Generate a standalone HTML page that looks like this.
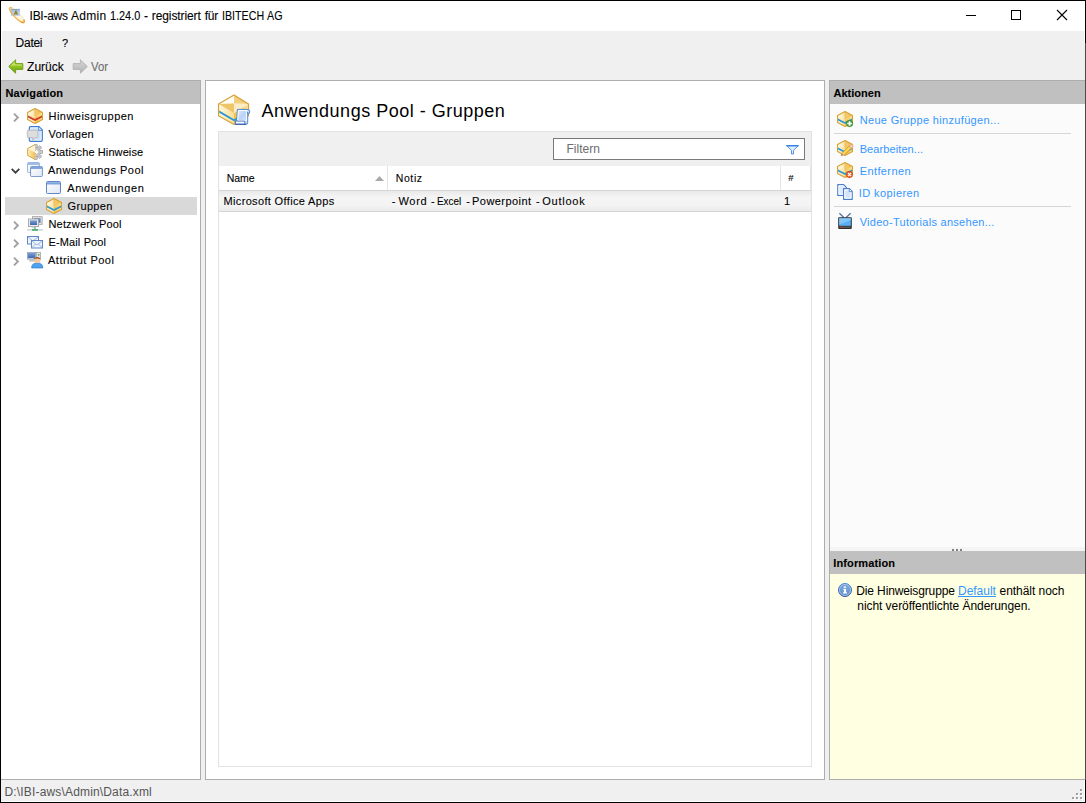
<!DOCTYPE html>
<html><head><meta charset="utf-8"><title>IBI-aws Admin</title>
<style>
*{box-sizing:border-box;margin:0;padding:0}
html,body{width:1086px;height:803px;overflow:hidden;background:#f0f0f0}
body{font-family:"Liberation Sans",sans-serif;font-size:12px;color:#000;position:relative}
.t{position:absolute;white-space:nowrap;line-height:20px;height:20px;-webkit-text-stroke:0.1px currentColor}
.a{position:absolute}
svg{position:absolute;overflow:visible}
</style></head><body>
<svg width="0" height="0" style="left:0;top:0"><defs>
<linearGradient id="gTop" x1="0" y1="0" x2="1" y2="0"><stop offset="0" stop-color="#fffef6"/><stop offset="0.45" stop-color="#fbe6ad"/><stop offset="0.55" stop-color="#f3cb6c"/><stop offset="1" stop-color="#f5bd48"/></linearGradient>
<linearGradient id="gL" x1="0" y1="0" x2="1" y2="0"><stop offset="0" stop-color="#fff8de"/><stop offset="1" stop-color="#f9de94"/></linearGradient>
<linearGradient id="gR" x1="0" y1="0" x2="1" y2="0"><stop offset="0" stop-color="#f6c045"/><stop offset="1" stop-color="#fbe29a"/></linearGradient>
<linearGradient id="gWin" x1="0" y1="0" x2="1" y2="1"><stop offset="0" stop-color="#ffffff"/><stop offset="1" stop-color="#dfe6f4"/></linearGradient>
<linearGradient id="gGreen" x1="0" y1="0" x2="0" y2="1"><stop offset="0" stop-color="#b5dc3c"/><stop offset="1" stop-color="#6aa60e"/></linearGradient>
<linearGradient id="gGray" x1="0" y1="0" x2="0" y2="1"><stop offset="0" stop-color="#d6d6d6"/><stop offset="1" stop-color="#b4b4b4"/></linearGradient>
<linearGradient id="gScroll" x1="0" y1="0" x2="1" y2="0"><stop offset="0" stop-color="#eef4fe"/><stop offset="0.5" stop-color="#b9d2f6"/><stop offset="1" stop-color="#dbe8fb"/></linearGradient>
<radialGradient id="gInfo" cx="0.5" cy="0.35" r="0.7"><stop offset="0" stop-color="#86aee0"/><stop offset="1" stop-color="#5585c4"/></radialGradient><linearGradient id="gInfoS" x1="0" y1="0" x2="0" y2="1"><stop offset="0" stop-color="#4a8ad6"/><stop offset="1" stop-color="#36509f"/></linearGradient>
<linearGradient id="gMon" x1="0" y1="0" x2="0" y2="1"><stop offset="0" stop-color="#7d9fd6"/><stop offset="1" stop-color="#3f68b2"/></linearGradient>
<linearGradient id="gSq" x1="0" y1="0" x2="0" y2="1"><stop offset="0" stop-color="#7391b6"/><stop offset=".25" stop-color="#a4c0e4"/><stop offset="1" stop-color="#bcd6f6"/></linearGradient>
<linearGradient id="gHalf" x1="0" y1="0" x2="1" y2="0"><stop offset="0" stop-color="#fff0c4"/><stop offset="1" stop-color="#f4bf4c"/></linearGradient>
<linearGradient id="gScroll2" x1="0" y1="0" x2="1" y2="1"><stop offset="0" stop-color="#dfeafb"/><stop offset=".5" stop-color="#bdd4f6"/><stop offset="1" stop-color="#cfe0f9"/></linearGradient>
<symbol id="box" viewBox="0 0 16 16">
 <path d="M8 .5L15.5 4.5V11.5L8 15.5L.5 11.5V4.5Z" fill="#fff6d8"/>
 <path d="M8 .5L15.5 4.5L8 9L.5 4.5Z" fill="url(#gTop)"/>
 <path d="M.5 4.5L8 9V15.5L.5 11.5Z" fill="url(#gL)"/>
 <path d="M15.5 4.5L8 9V15.5L15.5 11.5Z" fill="url(#gR)"/>
 <path d="M1 7.6L8 10.9L15 7.6V9.6L8 12.9L1 9.6Z" style="fill:var(--band)"/>
 <path d="M8 1V8.6" stroke="#d8a53c" stroke-width=".7" opacity=".7"/>
 <path d="M8 .5L15.5 4.5V11.5L8 15.5L.5 11.5V4.5Z" fill="none" stroke="#d6a235" stroke-width="1.1" stroke-linejoin="round"/>
</symbol>
<symbol id="boxs" viewBox="0 0 16 16">
 <path d="M7 .5L13.5 4V10L7 13.5L.5 10V4Z" fill="#fff6d8"/>
 <path d="M7 .5L13.5 4L7 7.8L.5 4Z" fill="url(#gTop)"/>
 <path d="M.5 4L7 7.8V13.5L.5 10Z" fill="url(#gL)"/>
 <path d="M13.5 4L7 7.8V13.5L13.5 10Z" fill="url(#gR)"/>
 <path d="M1 6.6L7 10L13 6.6V8.6L7 12L1 8.6Z" fill="#3a9fd8"/>
 <path d="M7 .5L13.5 4V10L7 13.5L.5 10V4Z" fill="none" stroke="#d6a235" stroke-width="1.1" stroke-linejoin="round"/>
</symbol>
<symbol id="win" viewBox="0 0 15 13">
 <rect x=".5" y=".5" width="14" height="12" rx="1.2" fill="url(#gWin)" stroke="#5f86c6"/>
 <path d="M1 1.2h13v2.3h-13z" fill="#7ea4dd"/>
</symbol>
<symbol id="chev" viewBox="0 0 6 10"><path d="M.8 .8L5 5L.8 9.2" fill="none" stroke="#a0a0a0" stroke-width="1.9"/></symbol>
</defs></svg>
<!-- window frame -->
<div class="a" style="left:0;top:0;width:1086px;height:803px;border:1px solid #000;background:#f0f0f0"></div>
<div class="a" style="left:1px;top:1px;width:1084px;height:30px;background:#fff"></div>
<div class="a" style="left:1px;top:31px;width:1px;height:49px;background:#fff"></div>
<div class="a" style="left:1084px;top:31px;width:1px;height:12px;background:#fff"></div>
<div class="a" style="left:1085px;top:43px;width:1px;height:737px;background:#4a4a4a"></div>
<div class="a" style="left:1px;top:801px;width:1084px;height:1px;background:#fff"></div>
<div class="a" style="left:1084px;top:780px;width:1px;height:21px;background:#fff"></div>

<!-- left panel -->
<div class="a" style="left:1px;top:80px;width:200px;height:700px;background:#fff;border:1px solid #adadad;border-left:none"></div>
<div class="a" style="left:1px;top:81px;width:199px;height:23px;background:#c0c0c0"></div>
<div class="a" style="left:5px;top:197px;width:192px;height:18px;background:#d9d9d9"></div>

<!-- center panel -->
<div class="a" style="left:205px;top:80px;width:620px;height:700px;background:#fff;border:1px solid #adadad"></div>
<div class="a" style="left:218px;top:131px;width:594px;height:636px;background:#fff;border:1px solid #e2e2e2"></div>
<div class="a" style="left:219px;top:132px;width:592px;height:34px;background:#f0f0f0"></div>
<div class="a" style="left:553px;top:138px;width:252px;height:22px;background:#fff;border:1px solid #7a7a7a"></div>
<div class="a" style="left:387px;top:166px;width:1px;height:24px;background:#e5e5e5"></div>
<div class="a" style="left:780px;top:166px;width:1px;height:24px;background:#e5e5e5"></div>
<div class="a" style="left:810px;top:166px;width:1px;height:24px;background:#e6e6e6"></div>
<div class="a" style="left:219px;top:190px;width:592px;height:22px;background:linear-gradient(#e9e9e9,#f4f4f4 30%,#f4f4f4 70%,#ebebeb);border-top:1px solid #d5d5d5;border-bottom:1px solid #d5d5d5"></div>

<!-- right panel -->
<div class="a" style="left:829px;top:80px;width:256px;height:700px;background:#fbfbfb;border:1px solid #adadad;border-right:none"></div>
<div class="a" style="left:830px;top:81px;width:255px;height:23px;background:#c0c0c0"></div>
<div class="a" style="left:834px;top:133px;width:237px;height:1px;background:#d6d6d6"></div>
<div class="a" style="left:834px;top:206px;width:237px;height:1px;background:#d6d6d6"></div>
<div class="a" style="left:830px;top:547px;width:255px;height:4px;background:#f4f4f4"></div>
<div class="a" style="left:830px;top:551px;width:255px;height:23px;background:#c0c0c0"></div>
<div class="a" style="left:830px;top:574px;width:255px;height:205px;background:#ffffe1"></div>
<!-- splitter grip -->
<div class="a" style="left:952px;top:549px;width:2px;height:2px;background:#808080;box-shadow:4px 0 0 #808080,8px 0 0 #808080"></div>
<!-- size grip -->
<div class="a" style="left:1080px;top:789px;width:2px;height:2px;background:#a0a0a0;box-shadow:1px 1px 0 #fff, 0 4px 0 #a0a0a0,1px 5px 0 #fff, 0 8px 0 #a0a0a0,1px 9px 0 #fff, -4px 4px 0 #a0a0a0,-3px 5px 0 #fff, -4px 8px 0 #a0a0a0,-3px 9px 0 #fff, -8px 8px 0 #a0a0a0,-7px 9px 0 #fff"></div>

<svg style="left:8px;top:6px" width="18" height="18" viewBox="0 0 18 18">
<ellipse cx="9.1" cy="9.3" rx="9.9" ry="2.8" transform="rotate(45 9.1 9.3)" fill="#fff3d6" fill-opacity=".75"/>
<path d="M2.1 2.3A9.9 2.8 45 0 1 16.1 16.3" fill="none" stroke="#f3c777" stroke-width="1" opacity=".5"/>
<rect x="3" y="2.9" width="8.9" height="7.1" fill="url(#gSq)" opacity=".92"/>
<path d="M6.3 8.8L7.9 4.9L9.5 8.8M6.9 7.6h2" stroke="#94801a" stroke-width="1.1" fill="none"/>
<path d="M2.1 2.3A9.9 2.8 45 0 0 16.1 16.3" fill="none" stroke="#eeab3f" stroke-width="1.2" opacity=".85"/>
<path d="M13.2 15.8A9.9 2.8 45 0 0 16.1 16.3A9.9 2.8 45 0 0 15.7 13.4" fill="none" stroke="#e89a24" stroke-width="1.3"/>
<path d="M1.9 4.2A9.9 2.8 45 0 1 4.2 1.9" fill="none" stroke="#f0b24a" stroke-width="1.5" opacity=".8"/>
</svg>
<svg style="left:966px;top:15px" width="10" height="1" viewBox="0 0 10 1"><rect width="10" height="1" fill="#000"/></svg>
<svg style="left:1011px;top:10px" width="10" height="10" viewBox="0 0 10 10"><rect x=".5" y=".5" width="9" height="9" fill="none" stroke="#000"/></svg>
<svg style="left:1057px;top:10px" width="10" height="10" viewBox="0 0 10 10"><path d="M0 0L10 10M10 0L0 10" stroke="#000" stroke-width="1.1"/></svg>
<svg style="left:8px;top:59px" width="16" height="15" viewBox="0 0 16 15"><path d="M.7 7.5L7.6 .8V4.6H14.8V10.4H7.6V14.2Z" fill="url(#gGreen)" stroke="#6a9c12" stroke-width=".9" stroke-linejoin="round"/><path d="M2.3 7.4L6.8 3V5.4H14V6.6H5Z" fill="#d6ee7e" opacity=".8"/></svg>
<svg style="left:72px;top:59px" width="16" height="15" viewBox="0 0 16 15"><path d="M15.3 7.5L8.4 .8V4.6H1.2V10.4H8.4V14.2Z" fill="url(#gGray)" stroke="#b0b0b0" stroke-width=".9" stroke-linejoin="round"/></svg>
<svg style="left:13px;top:113px" width="6" height="9" viewBox="0 0 6 9"><path d="M1 .6L4.9 4.5L1 8.4" fill="none" stroke="#a0a0a0" stroke-width="1.9"/></svg>
<svg style="left:13px;top:221px" width="6" height="9" viewBox="0 0 6 9"><path d="M1 .6L4.9 4.5L1 8.4" fill="none" stroke="#a0a0a0" stroke-width="1.9"/></svg>
<svg style="left:13px;top:239px" width="6" height="9" viewBox="0 0 6 9"><path d="M1 .6L4.9 4.5L1 8.4" fill="none" stroke="#a0a0a0" stroke-width="1.9"/></svg>
<svg style="left:13px;top:257px" width="6" height="9" viewBox="0 0 6 9"><path d="M1 .6L4.9 4.5L1 8.4" fill="none" stroke="#a0a0a0" stroke-width="1.9"/></svg>
<svg style="left:11px;top:168px" width="9" height="6" viewBox="0 0 9 6"><path d="M.7 .9L4.5 4.7L8.3 .9" fill="none" stroke="#3c3c3c" stroke-width="1.7"/></svg>
<svg style="left:27px;top:108px" width="16" height="16" viewBox="0 0 16 16"><use href="#box" width="16" height="16" style="--band:#cf3a2a"/></svg>
<svg style="left:27px;top:126px" width="16" height="16" viewBox="0 0 16 16">
<path d="M3.6 .7H12L15.3 4V14A1.3 1.3 0 0 1 14 15.3H3.6A1.3 1.3 0 0 1 2.3 14V2A1.3 1.3 0 0 1 3.6 .7Z" fill="#cde0f9" stroke="#3f7dd2" stroke-width="1.2"/>
<path d="M3.6 1.9H11.6L14.1 4.4V14H3.6Z" fill="none" stroke="#f2f7fe" stroke-width=".8"/>
<path d="M11.6 1V4.4H15" fill="#e6f0fd" stroke="#3f7dd2" stroke-width=".8"/>
<path d="M1.2 4.3H9.8A.9 .9 0 0 1 10.7 5.2V10.7A.9 .9 0 0 1 9.8 11.6H8L5.8 14.4V11.6H1.2A.9 .9 0 0 1 .3 10.7V5.2A.9 .9 0 0 1 1.2 4.3Z" fill="#dedede" stroke="#b5b5b5" stroke-width=".8"/>
</svg>
<svg style="left:27px;top:144px" width="16" height="16" viewBox="0 0 16 16">
<g fill="#cacaca" stroke="#909090" stroke-width=".6"><circle cx="8.6" cy="8" r="4.8"/>
<rect x="7.4" y=".7" width="2.8" height="3"/><rect x="7.4" y="12.3" width="2.8" height="3"/>
<rect x="12.6" y="6.6" width="3" height="2.8"/>
<rect x="11.2" y="2.2" width="3" height="2.8" transform="rotate(45 12.7 3.6)"/>
<rect x="11.2" y="11" width="3" height="2.8" transform="rotate(-45 12.7 12.4)"/></g>
<circle cx="8.6" cy="8" r="4.5" fill="#cacaca"/>
<circle cx="9.6" cy="8" r="1.9" fill="#fff" stroke="#a0a0a0" stroke-width=".4"/>
<path d="M8 .6L.6 4.6V11.4L8 15.4Z" fill="url(#gHalf)"/>
<path d="M8 .6L.6 4.6L8 8.4Z" fill="#fffbea" opacity=".85"/>
<path d="M8 .6L.6 4.6V11.4L8 15.4" fill="none" stroke="#dba83e" stroke-width="1" stroke-linejoin="round"/>
</svg>
<svg style="left:27px;top:162px" width="16" height="15" viewBox="0 0 16 15"><use href="#win" x="0" y="0" width="13" height="11" opacity=".75"/><use href="#win" x="3" y="4" width="13" height="11"/></svg>
<svg style="left:46px;top:181px" width="15" height="13" viewBox="0 0 15 13"><use href="#win" width="15" height="13"/></svg>
<svg style="left:46px;top:198px" width="16" height="16" viewBox="0 0 16 16"><use href="#box" width="16" height="16" style="--band:#2f9ad6"/></svg>
<svg style="left:27px;top:216px" width="16" height="16" viewBox="0 0 16 16">
<rect x="5.5" y=".7" width="9.6" height="7.6" fill="#e6e6e6" stroke="#9a9a9a" stroke-width=".8"/><rect x="7" y="2" width="6.6" height="4.6" fill="url(#gMon)"/>
<rect x="1.5" y="3" width="10" height="7.6" fill="#ececec" stroke="#9a9a9a" stroke-width=".8"/><rect x="3" y="4.4" width="7" height="4.6" fill="url(#gMon)"/>
<path d="M4.5 11.8h4l-.8-1.2h-2.4z" fill="#c8c8c8"/>
<rect x="0" y="13.2" width="16" height="1.4" fill="#c9d2d2"/><rect x="5" y="13" width="6" height="1.8" fill="#4fb07a"/><rect x="7.4" y="11" width="1.2" height="2.2" fill="#4fb07a"/>
</svg>
<svg style="left:27px;top:235.5px" width="16" height="13" viewBox="0 0 16 13">
<rect x=".5" y=".5" width="11" height="7.5" fill="#eef3fc" stroke="#5f86c6"/><path d="M1 1L6 5L11 1" fill="none" stroke="#8fb0e4" stroke-width=".9"/>
<rect x="4.5" y="4.5" width="11" height="7.5" fill="#eef3fc" stroke="#5f86c6"/><path d="M5 5L10 9L15 5M5 11.6L8.6 8M15 11.6L11.4 8" fill="none" stroke="#8fb0e4" stroke-width=".9"/>
</svg>
<svg style="left:27px;top:252px" width="16" height="16" viewBox="0 0 16 16">
<rect x="9.6" y=".6" width="4" height="7" fill="#e4e4e4" stroke="#9a9a9a" stroke-width=".7"/><rect x="11" y="2" width="1.4" height="1.6" fill="#3fb04f"/>
<rect x=".4" y=".4" width="8.4" height="6.8" fill="#d8d8d8" stroke="#7d8fb0" stroke-width=".6"/><rect x=".9" y=".9" width="7.4" height="5.2" fill="url(#gMon)"/>
<path d="M2 9.4h5.4l-.8-1.4h-3.8z" fill="#bdbdbd"/>
<path d="M4.6 16C4.6 12.4 6.6 11 10.2 11C13.8 11 15.8 12.4 15.8 16Z" fill="#4ea4ee" stroke="#2d6fc2" stroke-width=".6"/>
<circle cx="10.2" cy="8" r="3.2" fill="#f6c9a0"/><path d="M6.8 7.6C6.8 4.2 13.6 4.2 13.6 7.6C12 6.4 9 6.2 6.8 7.6Z" fill="#8a5a2c"/>
</svg>
<svg style="left:218px;top:94.3px" width="32" height="32" viewBox="0 0 32 32">
<path d="M16 1L30.5 10V21.8L16 30.4L.5 21.8V10Z" fill="#fdf2cc"/>
<path d="M16 1L.5 10L16 9.6Z" fill="#fffdf2"/><path d="M16 1L30.5 10L16 9.6Z" fill="#f3cf7c"/>
<path d="M.5 10L16 9.6V19.2Z" fill="#efc56a"/><path d="M30.5 10L16 9.6V19.2Z" fill="#fbecc6"/>
<path d="M.5 10L16 19.2V30.4L.5 21.8Z" fill="url(#gL)"/>
<path d="M30.5 10L16 19.2V30.4L30.5 21.8Z" fill="url(#gR)"/>
<path d="M1.2 16.6L16 25.2L22 21.8V23.8L16 27.2L1.2 18.8Z" fill="#2b97d4"/>
<path d="M16 1L30.5 10V21.8L16 30.4L.5 21.8V10Z" fill="none" stroke="#d6a03a" stroke-width="1.2" stroke-linejoin="round"/>
<path d="M19.4 15.4H29.2Q31.8 15.4 31.8 17.7Q31.8 19.8 29.7 19.8V28.8Q29.7 30.2 28.3 30.2H17.4V27H18.7Z" fill="url(#gScroll)" stroke="#4a84d4" stroke-width="1" stroke-linejoin="round"/>
<path d="M20.4 16.5H28.6V26.6H19.8Z" fill="url(#gScroll2)" stroke="#fff" stroke-width=".9"/>
<path d="M29.7 19.8V17.8" stroke="#3f74c4" stroke-width="1.1"/>
<path d="M17.4 27.1H26.8V30.1H17.4Z" fill="#fff" stroke="#3f6fc0" stroke-width=".9" stroke-linejoin="round"/>
<path d="M17.4 30.3H28.4" stroke="#335fae" stroke-width=".9"/>
</svg>
<svg style="left:786px;top:145px" width="13" height="10" viewBox="0 0 13 10"><path d="M.7 .7H12.3L7.5 5.3V9H5.5V5.3Z" fill="#e3eefc" stroke="#3f8ae3" stroke-width=".9" stroke-linejoin="round"/><path d="M.4 .7H12.6" stroke="#2f7fe0" stroke-width="1.3"/></svg>
<svg style="left:375px;top:176px" width="9" height="5" viewBox="0 0 9 5"><path d="M0 5L4.5 0L9 5Z" fill="#a9a9a9"/></svg>
<svg style="left:837px;top:111px" width="16" height="16" viewBox="0 0 16 16"><use href="#box" width="16" height="16" style="--band:#2f9ad6"/><circle cx="12.6" cy="12.5" r="3.2" fill="#4a9e38" stroke="#37802a" stroke-width=".6"/><path d="M12.6 10.2V14.8M10.3 12.5H14.9" stroke="#fff" stroke-width="1.7"/></svg>
<svg style="left:837px;top:140px" width="16" height="16" viewBox="0 0 16 16"><use href="#box" width="16" height="16" style="--band:#2f9ad6"/><path d="M4.4 15.4L5.6 12.4L12.2 6L14.4 8.4L7.6 14.6Z" fill="#f5d84e" stroke="#d08a2c" stroke-width=".8" stroke-linejoin="round"/><path d="M12.2 6L13.4 5A1.6 1.6 0 0 1 15.6 7.4L14.4 8.4Z" fill="#f6cdb8" stroke="#d9977a" stroke-width=".6"/><path d="M4.4 15.4L5.6 12.4L7.6 14.6Z" fill="#f1c9a4"/><path d="M4.4 15.4L4.9 14.1L5.8 15Z" fill="#3a2a1a"/></svg>
<svg style="left:837px;top:162px" width="16" height="16" viewBox="0 0 16 16"><use href="#box" width="16" height="16" style="--band:#2f9ad6"/><circle cx="12.5" cy="12.5" r="3.2" fill="#e4571f" stroke="#c8400f" stroke-width=".6"/><path d="M10.9 10.9L14.1 14.1M14.1 10.9L10.9 14.1" stroke="#fff" stroke-width="1.3"/></svg>
<svg style="left:837px;top:184px" width="16" height="16" viewBox="0 0 16 16">
<path d="M.8 .7H6.6L9.4 3.4V11.4H.8Z" fill="#dfeafb" stroke="#4c7dcc" stroke-width="1.2" stroke-linejoin="round"/>
<path d="M1.9 1.8H6.2L8.3 3.9V10.3H1.9Z" fill="none" stroke="#fff" stroke-width=".9"/>
<path d="M6.6 4.7H12.4L15.2 7.4V15.3H6.6Z" fill="#d5e4fa" stroke="#4c7dcc" stroke-width="1.2" stroke-linejoin="round"/>
<path d="M7.7 5.8H12L14.1 7.9V14.2H7.7Z" fill="none" stroke="#fff" stroke-width=".9"/>
<path d="M12.2 4.9V7.6H15" fill="#eef4fe" stroke="#4c7dcc" stroke-width=".8"/>
</svg>
<svg style="left:837px;top:213px" width="16" height="16" viewBox="0 0 16 16">
<path d="M2.4 .3L6.8 4.4M13.6 .3L9.2 4.4" stroke="#56739f" stroke-width="1.3"/>
<rect x="1.2" y="4.3" width="13.6" height="11.6" rx=".8" fill="#2e2e2e"/>
<rect x="2.2" y="5.2" width="11.6" height="7.6" fill="#5bb0f4"/>
<path d="M2.2 5.2H13.8V7L2.2 11.4Z" fill="#8fcbf9" opacity=".8"/>
<rect x="2.4" y="13.6" width="11.2" height="1.1" fill="#6a6a6a"/><rect x="3.6" y="13.4" width="1.6" height="1.4" fill="#e8282a"/>
</svg>
<svg style="left:838px;top:583px" width="14" height="14" viewBox="0 0 14 14"><circle cx="7" cy="7" r="6.5" fill="url(#gInfo)" stroke="url(#gInfoS)" stroke-width="1"/><circle cx="7" cy="7" r="5.5" fill="none" stroke="#c4d8f1" stroke-width=".8" opacity=".85"/><rect x="5.9" y="3.5" width="2" height="1.5" fill="#fff"/><path d="M5.4 6H8V9.2H8.9V10.4H5V9.2H6V6.9H5.4Z" fill="#fff"/></svg>

<div class="t" id="ti1" style="left:29.6px;top:6px;font-size:12px;letter-spacing:-0.283px;">IBI-aws</div>
<div class="t" id="ti2" style="left:71.1px;top:6px;font-size:12px;letter-spacing:0.275px;">Admin</div>
<div class="t" id="ti3" style="left:110.2px;top:6px;font-size:12px;transform:scaleX(0.906);transform-origin:0 0;">1.24.0</div>
<div class="t" id="ti4" style="left:144.0px;top:6px;font-size:12px;">-</div>
<div class="t" id="ti5" style="left:151.8px;top:6px;font-size:12px;letter-spacing:-0.100px;">registriert</div>
<div class="t" id="ti6" style="left:204.7px;top:6px;font-size:12px;letter-spacing:-0.250px;">für</div>
<div class="t" id="ti7" style="left:222.2px;top:6px;font-size:12px;transform:scaleX(0.889);transform-origin:0 0;">IBITECH</div>
<div class="t" id="ti8" style="left:267.2px;top:6px;font-size:12px;transform:scaleX(0.894);transform-origin:0 0;">AG</div>
<div class="t" id="m1" style="left:15.6px;top:33px;font-size:12px;letter-spacing:-0.275px;">Datei</div>
<div class="t" id="m2" style="left:62.0px;top:33px;font-size:11px;">?</div>
<div class="t" id="tb1" style="left:27.1px;top:57px;font-size:12px;">Zurück</div>
<div class="t" id="tb2" style="left:90.8px;top:57px;font-size:12px;transform:scaleX(0.939);transform-origin:0 0;color:#6d6d6d;">Vor</div>
<div class="t" id="nav" style="left:5.5px;top:83px;font-size:11px;font-weight:700;letter-spacing:0.144px;">Navigation</div>
<div class="t" id="t1" style="left:48.5px;top:106px;font-size:11px;letter-spacing:0.469px;">Hinweisgruppen</div>
<div class="t" id="t2" style="left:48.5px;top:124px;font-size:11px;letter-spacing:0.257px;">Vorlagen</div>
<div class="t" id="t3" style="left:48.5px;top:142px;font-size:11px;letter-spacing:0.100px;">Statische Hinweise</div>
<div class="t" id="t4" style="left:48.0px;top:160px;font-size:11px;letter-spacing:0.486px;">Anwendungs Pool</div>
<div class="t" id="t5" style="left:67.3px;top:178px;font-size:11px;letter-spacing:0.620px;">Anwendungen</div>
<div class="t" id="t6" style="left:67.5px;top:196px;font-size:11px;letter-spacing:0.350px;">Gruppen</div>
<div class="t" id="t7" style="left:48.5px;top:214px;font-size:11px;letter-spacing:0.167px;">Netzwerk Pool</div>
<div class="t" id="t8" style="left:48.5px;top:232px;font-size:11px;letter-spacing:0.130px;">E-Mail Pool</div>
<div class="t" id="t9" style="left:48.0px;top:250px;font-size:11px;letter-spacing:0.500px;">Attribut Pool</div>
<div class="t" id="head" style="left:261.5px;top:101px;font-size:18px;letter-spacing:0.508px;-webkit-text-stroke:0;">Anwendungs Pool - Gruppen</div>
<div class="t" id="filt" style="left:566.5px;top:139px;font-size:12px;color:#6d6d6d;-webkit-text-stroke:0;">Filtern</div>
<div class="t" id="c1" style="left:226.7px;top:168px;font-size:10.5px;letter-spacing:-0.067px;">Name</div>
<div class="t" id="c2" style="left:395.7px;top:168px;font-size:10.5px;letter-spacing:0.625px;">Notiz</div>
<div class="t" id="c3" style="left:788.3px;top:168px;font-size:9.5px;">#</div>
<div class="t" id="r1" style="left:223.5px;top:191px;font-size:11px;letter-spacing:0.345px;">Microsoft Office Apps</div>
<div class="t" id="r2a" style="left:391.8px;top:191px;font-size:11px;">-</div>
<div class="t" id="r2b" style="left:398.4px;top:191px;font-size:11px;letter-spacing:0.733px;">Word</div>
<div class="t" id="r2c" style="left:430.9px;top:191px;font-size:11px;">-</div>
<div class="t" id="r2d" style="left:437.2px;top:191px;font-size:11px;transform:scaleX(0.896);transform-origin:0 0;">Excel</div>
<div class="t" id="r2e" style="left:466.3px;top:191px;font-size:11px;">-</div>
<div class="t" id="r2f" style="left:472.1px;top:191px;font-size:11px;letter-spacing:0.433px;">Powerpoint</div>
<div class="t" id="r2g" style="left:535.9px;top:191px;font-size:11px;">-</div>
<div class="t" id="r2h" style="left:542.3px;top:191px;font-size:11px;letter-spacing:0.750px;">Outlook</div>
<div class="t" id="r3" style="left:784.0px;top:191px;font-size:11px;">1</div>
<div class="t" id="akt" style="left:833.4px;top:83px;font-size:11px;font-weight:700;letter-spacing:0.043px;">Aktionen</div>
<div class="t" id="a1" style="left:859.7px;top:110px;font-size:11px;letter-spacing:0.333px;color:#3497ff;-webkit-text-stroke:0;">Neue Gruppe hinzufügen...</div>
<div class="t" id="a2" style="left:859.7px;top:139px;font-size:11px;letter-spacing:0.092px;color:#3497ff;-webkit-text-stroke:0;">Bearbeiten...</div>
<div class="t" id="a3" style="left:859.7px;top:161px;font-size:11px;letter-spacing:0.400px;color:#3497ff;-webkit-text-stroke:0;">Entfernen</div>
<div class="t" id="a4" style="left:858.7px;top:183px;font-size:11px;letter-spacing:0.430px;color:#3497ff;-webkit-text-stroke:0;">ID kopieren</div>
<div class="t" id="a5" style="left:859.7px;top:212px;font-size:11px;letter-spacing:0.276px;color:#3497ff;-webkit-text-stroke:0;">Video-Tutorials ansehen...</div>
<div class="t" id="inf" style="left:833.2px;top:553px;font-size:11px;font-weight:700;letter-spacing:0.140px;">Information</div>
<div class="t" id="i1" style="left:856.3px;top:581px;font-size:12px;letter-spacing:-0.131px;-webkit-text-stroke:0;">Die Hinweisgruppe</div>
<div class="t" id="i2" style="left:958.0px;top:581px;font-size:12px;letter-spacing:-0.017px;color:#3497ff;text-decoration:underline;-webkit-text-stroke:0;">Default</div>
<div class="t" id="i3" style="left:999.6px;top:581px;font-size:12px;letter-spacing:-0.055px;-webkit-text-stroke:0;">enthält noch</div>
<div class="t" id="i4" style="left:857.3px;top:596px;font-size:12px;letter-spacing:-0.059px;-webkit-text-stroke:0;">nicht veröffentlichte Änderungen.</div>
<div class="t" id="status" style="left:4.5px;top:782px;font-size:12px;letter-spacing:0.163px;color:#555;-webkit-text-stroke:0;">D:\IBI-aws\Admin\Data.xml</div>
</body></html>
